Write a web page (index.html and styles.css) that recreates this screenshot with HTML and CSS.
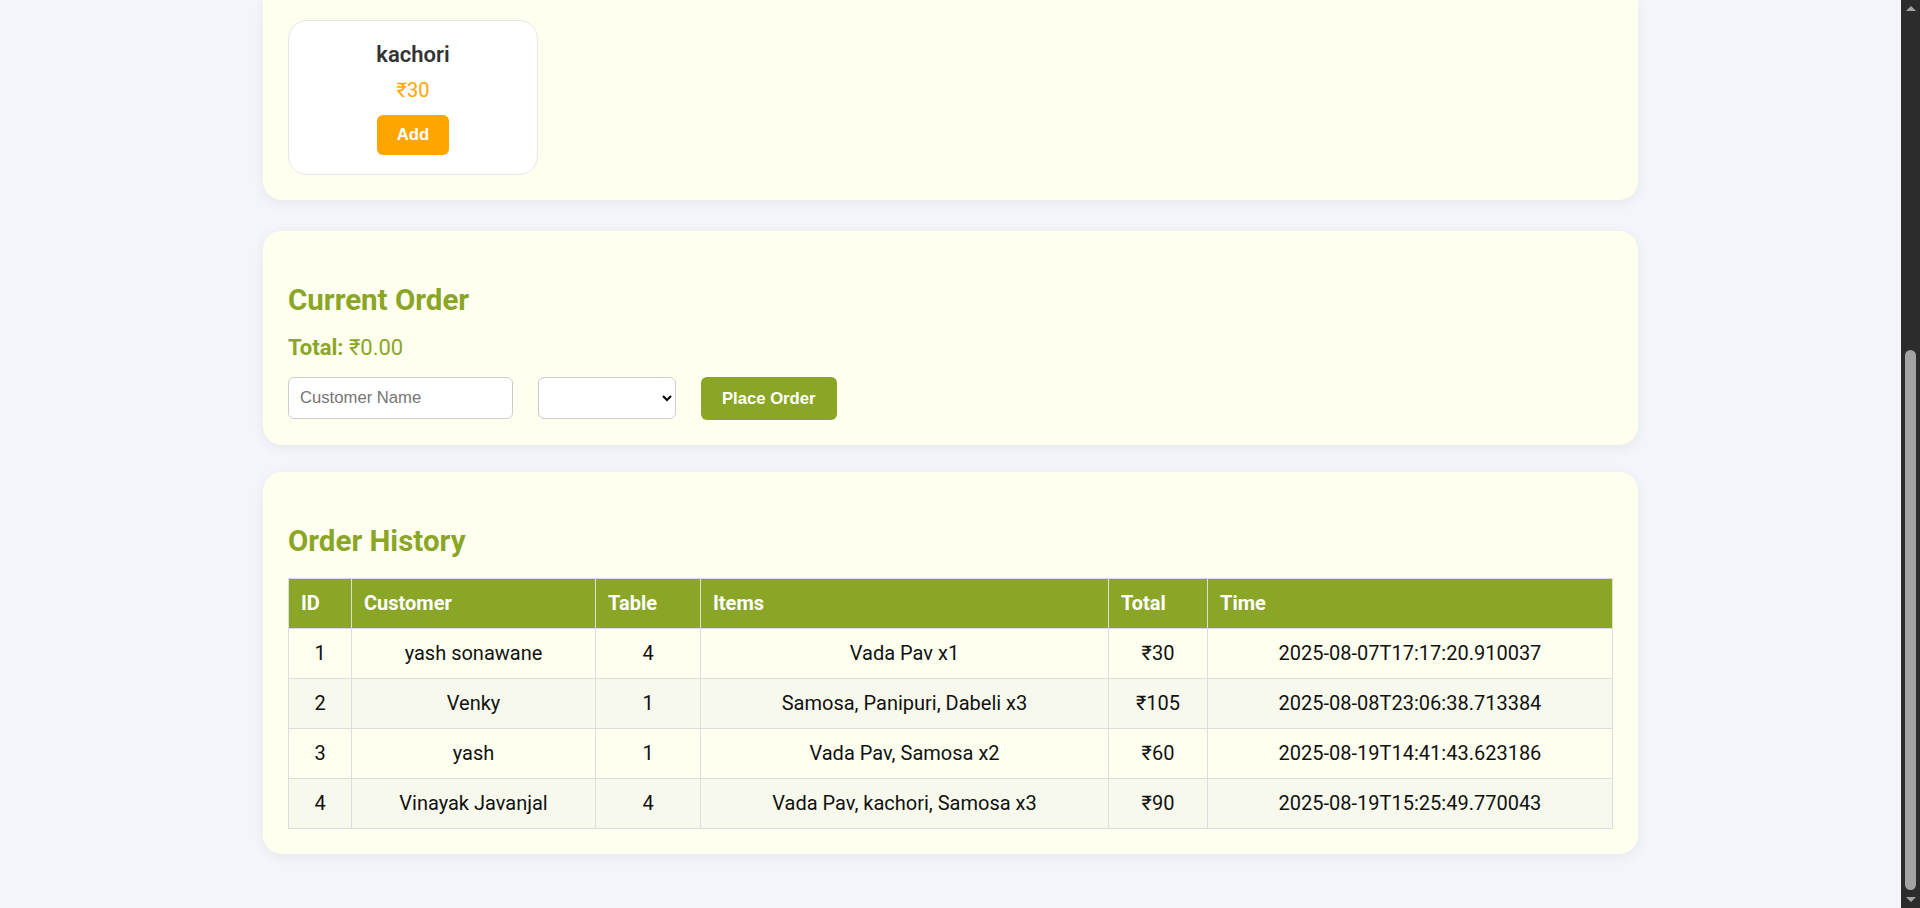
FILE: index.html
```html
<!DOCTYPE html>
<html lang="en">
<head>
<meta charset="utf-8">
<title>Restaurant Order System</title>
<link rel="stylesheet" href="styles.css">
</head>
<body>
<div class="window">
  <main class="page-area">
    <div class="page">
      <section class="panel panel-menu">
        <div class="menu-grid">
          <div class="item-card">
            <h3 class="item-name">kachori</h3>
            <p class="item-price">₹30</p>
            <button class="btn-add">Add</button>
          </div>
        </div>
      </section>

      <section class="panel panel-order">
        <h2 class="panel-title">Current Order</h2>
        <p class="order-total"><strong>Total:</strong> ₹0.00</p>
        <div class="order-form">
          <input class="field-name" type="text" placeholder="Customer Name">
          <select class="field-table">
            <option value=""></option>
          </select>
          <button class="btn-place">Place Order</button>
        </div>
      </section>

      <section class="panel panel-history">
        <h2 class="panel-title">Order History</h2>
        <table class="orders">
          <colgroup>
            <col class="col-id">
            <col class="col-customer">
            <col class="col-table">
            <col class="col-items">
            <col class="col-total">
            <col class="col-time">
          </colgroup>
          <thead>
            <tr><th>ID</th><th>Customer</th><th>Table</th><th>Items</th><th>Total</th><th>Time</th></tr>
          </thead>
          <tbody>
            <tr><td>1</td><td>yash sonawane</td><td>4</td><td>Vada Pav x1</td><td>₹30</td><td>2025-08-07T17:17:20.910037</td></tr>
            <tr><td>2</td><td>Venky</td><td>1</td><td>Samosa, Panipuri, Dabeli x3</td><td>₹105</td><td>2025-08-08T23:06:38.713384</td></tr>
            <tr><td>3</td><td>yash</td><td>1</td><td>Vada Pav, Samosa x2</td><td>₹60</td><td>2025-08-19T14:41:43.623186</td></tr>
            <tr><td>4</td><td>Vinayak Javanjal</td><td>4</td><td>Vada Pav, kachori, Samosa x3</td><td>₹90</td><td>2025-08-19T15:25:49.770043</td></tr>
          </tbody>
        </table>
      </section>
    </div>
  </main>

  <div class="scrollbar" aria-hidden="true">
    <div class="sb-button"><span class="sb-arrow-up"></span></div>
    <div class="sb-track"><div class="sb-thumb"></div></div>
    <div class="sb-button"><span class="sb-arrow-down"></span></div>
  </div>
</div>
</body>
</html>
```

FILE: styles.css
```css
html, body {
  margin: 0;
  height: 100%;
  overflow: hidden;
}

body {
  font-family: Roboto, "Liberation Sans", Arial, sans-serif;
  background: #f4f5fa;
  color: #111;
}

.window {
  display: flex;
  height: 100vh;
}

.page-area {
  flex: 1;
  min-width: 0;
}

.page {
  width: 1375px;
  margin: 0 auto;
  padding-bottom: 55px;
}

/* drawn scrollbar (page is scrolled to the bottom) */
.scrollbar {
  flex: none;
  width: 19px;
  background: #2c2c2c;
  display: flex;
  flex-direction: column;
}

.sb-button {
  height: 17px;
  display: flex;
  align-items: center;
  justify-content: center;
}

.sb-arrow-up {
  width: 0;
  height: 0;
  border-left: 5px solid transparent;
  border-right: 5px solid transparent;
  border-bottom: 5px solid #a3a3a3;
}

.sb-arrow-down {
  width: 0;
  height: 0;
  border-left: 5px solid transparent;
  border-right: 5px solid transparent;
  border-top: 5px solid #a3a3a3;
}

.sb-track {
  flex: 1;
  display: flex;
  flex-direction: column;
  justify-content: flex-end;
  padding: 0 4px 1px;
}

.sb-thumb {
  height: 540px;
  background: #a3a3a3;
  border-radius: 6px;
}

/* panels */
.panel {
  background: #fffff0;
  border-radius: 19px;
  padding: 25px;
  box-shadow: 0 3px 14px rgba(0, 0, 0, 0.06);
}

.panel-menu {
  padding-top: 20px;
  margin-bottom: 31px;
  border-top-left-radius: 0;
  border-top-right-radius: 0;
}

.panel-order {
  margin-bottom: 27px;
}

.panel-title {
  font-size: 29.5px;
  font-weight: 700;
  color: #8ba627;
  margin: 27px 0 18px;
}

.panel-history .panel-title {
  margin-bottom: 20px;
}

.menu-grid {
  display: flex;
  flex-wrap: wrap;
  gap: 25px;
}

.item-card {
  box-sizing: border-box;
  width: 250px;
  padding: 21px 15px 19px;
  background: #fff;
  border: 1px solid #e6e6e6;
  border-radius: 19px;
  text-align: center;
}

.item-name {
  margin: 0 0 11px;
  font-size: 22px;
  font-weight: 600;
  color: #333;
}

.item-price {
  margin: 0 0 13px;
  font-size: 20px;
  color: #ffa500;
}

.btn-add {
  height: 40px;
  padding: 0 20px;
  background: #ffa500;
  color: #fff;
  border: none;
  border-radius: 6px;
  font: bold 16.67px "Liberation Sans", Arial, sans-serif;
}

.order-total {
  margin: 0 0 17px;
  font-size: 22px;
  color: #8ba627;
}

.order-form {
  display: flex;
  align-items: flex-start;
  gap: 25px;
}

.field-name {
  box-sizing: border-box;
  width: 225px;
  height: 42px;
  padding: 0 11px;
  border: 1px solid #ccc;
  border-radius: 6px;
  background: #fff;
  font: 16.67px "Liberation Sans", Arial, sans-serif;
}

.field-table {
  box-sizing: border-box;
  width: 138px;
  height: 42px;
  border: 1px solid #ccc;
  border-radius: 6px;
  background: #fff;
  font: 16.67px "Liberation Sans", Arial, sans-serif;
}

.btn-place {
  height: 43px;
  padding: 0 21px;
  background: #8ba627;
  color: #fff;
  border: none;
  border-radius: 6px;
  font: bold 16.67px "Liberation Sans", Arial, sans-serif;
}

/* order history table */
.orders {
  width: 100%;
  border-collapse: collapse;
  table-layout: fixed;
  font-size: 20px;
}

.col-id { width: 63px; }
.col-customer { width: 244px; }
.col-table { width: 105px; }
.col-items { width: 408px; }
.col-total { width: 99px; }

.orders th {
  background: #8ba627;
  color: #fff;
  text-align: left;
  font-weight: 700;
  padding: 12px;
  line-height: 25px;
  border: 1px solid #ddd;
}

.orders td {
  text-align: center;
  padding: 12px;
  line-height: 25px;
  border: 1px solid #ddd;
  color: #111;
}

.orders tbody tr:nth-child(even) td {
  background: #f6f9eb;
}
```
